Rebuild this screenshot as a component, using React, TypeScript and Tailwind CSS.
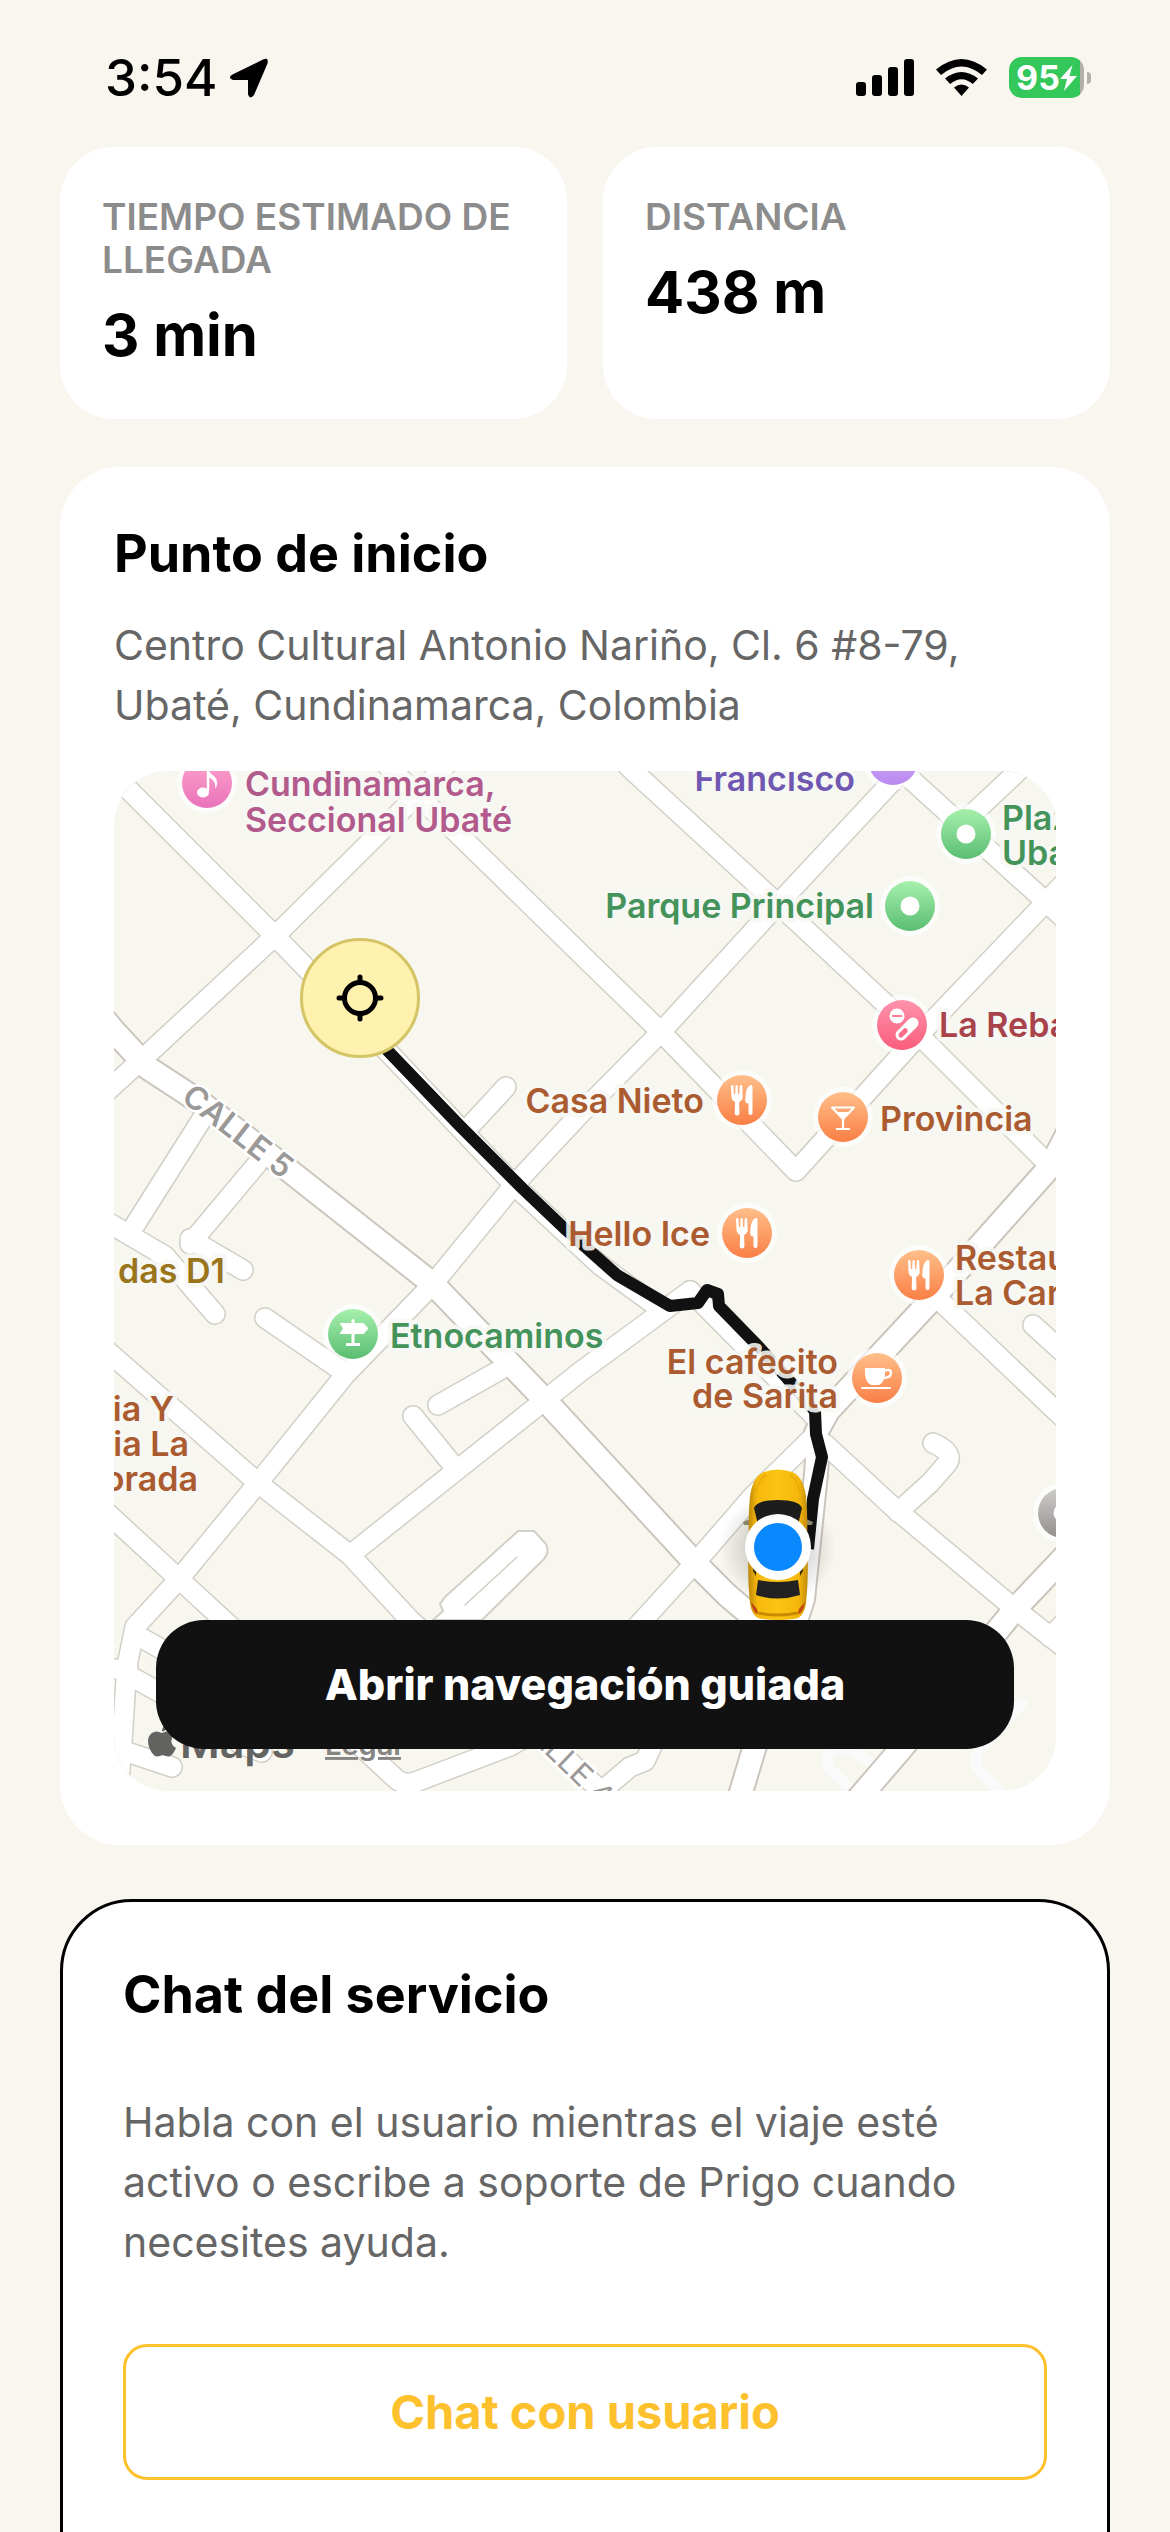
import type { ReactNode } from 'react';
import { FaApple } from 'react-icons/fa';

// Street geometry, in map units
const minorRoads = [
  'M100 762 L129 791 L268 930 L308 971 L388 1053 L514 1186 L600 1266 L655 1306',
  'M104 1095 L149 1054 L275 937 L373 840 L417 796 L446 766',
  'M387 766 L417 796 L457 834 L590 964 L661 1033 L796 1172 L919 1036 L1046 903 L1070 878',
  'M627 766 L633 772 L778 905 L919 1036 L1050 1167',
  'M433 1285 L514 1186 L580 1115 L661 1033 L778 905 L888 787 L910 765',
  'M893 764 L1046 903 L1070 925',
  'M965 822 L1015 775 L1030 760',
  'M433 1285 L345 1376 L258 1484 L179 1580 L135 1628 L128 1662 L126 1680 L122 1743 L118 1800',
  'M265 1319 L345 1374',
  'M438 1406 L507 1367',
  'M413 1417 L452 1465',
  'M350 1556 L545 1401 L580 1373 L655 1318 L690 1292',
  'M690 1292 L703 1305 L815 1418',
  'M104 1349 L258 1484 L350 1556 L410 1621 L550 1745 L610 1800',
  'M104 1511 L179 1580 L367 1753 L395 1779 Q405 1788 418 1782 L510 1747 L540 1730',
  'M202 1120 L135 1226',
  'M257 1165 L190 1245',
  'M104 1221 L165 1257 L215 1315',
  'M190 1240 L243 1271',
  'M506 1088 L470 1127',
  'M933 1444 Q958 1455 944 1468 L930 1484 L898 1513',
  'M1033 1326 L1066 1356',
  'M935 1297 L1056 1412 L1070 1425',
  'M825 1445 L893 1508 L1015 1610 L1066 1650',
  'M1050 1638 L1066 1622',
  'M813 1438 L753 1497 L695 1564 L643 1621 L600 1667',
  'M597 1796 L630 1768 L645 1762 L656 1738',
  'M104 1670 L128 1670',
  'M140 1638 L200 1672',
  'M132 1678 L200 1716',
  'M124 1752 L172 1768',
  'M240 1745 L262 1753',
];

const majorRoads = [
  'M104 1020 L114 1032 L148 1069 L200 1103 L277 1162 L433 1285 L545 1401 L580 1439 L695 1564 L727 1596 L850 1700',
  'M1070 1130 L1050 1168 L935 1297 L828 1412 L816 1434',
  'M818 1445 L816 1475 L803 1600 L754 1750 L739 1800',
  'M1070 1552 L1015 1610 L901 1750 L858 1800',
];

const faintRoads = [
  'M873 1765 Q835 1738 828 1756 Q824 1768 838 1778 L860 1798',
  'M1022 1704 L980 1750 Q970 1762 982 1774 L1004 1796',
];

const route =
  'M366 1030 L388 1052 L460 1127 L523 1190 L564 1229 L617 1276 L670 1307 L698 1304 L707 1291 L718 1295 L719 1307 L757 1346 L787 1379 L815 1412 L816 1435 L822 1458 L813 1500 L808 1550';

type Label = { text: string; x: number; y: number; color: string; end?: boolean };

const labels: Label[] = [
  { text: 'Cundinamarca,', x: 245, y: 797, color: '#b25a8c' },
  { text: 'Seccional Ubaté', x: 245, y: 833, color: '#b25a8c' },
  { text: 'Francisco', x: 855, y: 792, color: '#7058b2', end: true },
  { text: 'Plaz', x: 1002, y: 831, color: '#44935b' },
  { text: 'Uba', x: 1002, y: 866, color: '#44935b' },
  { text: 'Parque Principal', x: 874, y: 919, color: '#44935b', end: true },
  { text: 'La Reba', x: 939, y: 1038, color: '#a8434b' },
  { text: 'Casa Nieto', x: 704, y: 1114, color: '#ab5b30', end: true },
  { text: 'Provincia', x: 880, y: 1132, color: '#ab5b30' },
  { text: 'Hello Ice', x: 710, y: 1247, color: '#ab5b30', end: true },
  { text: 'Restau', x: 955, y: 1271, color: '#ab5b30' },
  { text: 'La Car', x: 955, y: 1306, color: '#ab5b30' },
  { text: 'das D1', x: 225, y: 1284, color: '#99751c', end: true },
  { text: 'Etnocaminos', x: 390, y: 1349, color: '#44935b' },
  { text: 'ia Y', x: 174, y: 1422, color: '#ab5b30', end: true },
  { text: 'ia La', x: 189, y: 1457, color: '#ab5b30', end: true },
  { text: 'orada', x: 198, y: 1492, color: '#ab5b30', end: true },
  { text: 'El cafecito', x: 838, y: 1375, color: '#ab5b30', end: true },
  { text: 'de Sarita', x: 838, y: 1409, color: '#ab5b30', end: true },
];

function Poi({ x, y, fill, children }: { x: number; y: number; fill: string; children?: ReactNode }) {
  return (
    <g transform={`translate(${x} ${y})`}>
      <circle r="30" fill="#fff" opacity="0.65" />
      <circle r="25" fill={`url(#${fill})`} />
      {children}
    </g>
  );
}

const Cutlery = () => (
  <g fill="#fff">
    <path d="M-11-14q0-1 1.2-1t1.3 1l.4 8h1.3l.3-8q0-1 1.1-1t1.1 1l.3 8h1.3l.4-8q0-1 1.3-1t1.2 1l.5 11q0 3-3.6 5l.4 11q0 2.500-2.400 2.500t-2.400-2.500l.4-11q-3.600-2-3.600-5z" />
    <path d="M10.500-13v26q0 2-2 2t-2-2v-9.500q-3.500 0-3.300-3.500 .3-10 3.300-13.500 1.600-2 3-1.500 1 .3 1 2z" />
  </g>
);

const Dot = () => <circle r="9.500" fill="#fff" />;

function Taxi() {
  return (
    <g transform="translate(778 1545)">
      <ellipse cy="4" rx="58" ry="56" fill="url(#shade)" />
      <path d="M-28-25l-7 3 1 3 8 0zM28-25l7 3-1 3-8 0z" fill="#8a8468" />
      <path d="M-28-48q3-20 14-24 14-5 28 0 11 4 14 24 2 20 1 45 2 35-1 62-2 15-12 16-16 2-32 0-10-1-12-16-3-27-1-62-1-25 1-45z" fill="url(#taxi)" />
      <path d="M-22-52q4-15 10-17M22-52q-4-15-10-17" fill="none" stroke="#e8ab08" strokeWidth="1.500" />
      <path d="M-24-36q3-8 24-8t24 8l-5 21q-19-6-38 0z" fill="#1d1d1d" />
      <path d="M-24-20q3 18 2 52l-3-5zM24-20q-3 18-2 52l3-5z" fill="#3b3108" />
      <path d="M-20 36q20 4 40 0l2 15q-22 7-44 0z" fill="#222" />
      <path d="M-27 58q2 11 7 12l-1-5zM27 58q-2 11-7 12l1-5z" fill="#c2440c" />
      <path d="M-20 69q20 4 40 0" fill="none" stroke="#c98a04" strokeWidth="3" />
      <circle cy="3" r="33" fill="#fff" />
      <circle cy="3" r="24" fill="#0a89ff" />
    </g>
  );
}

function RouteMap() {
  return (
    <svg
      viewBox="114 772 942 1020"
      preserveAspectRatio="xMidYMid slice"
      className="block h-full w-full font-['Inter',sans-serif]"
      role="img"
      aria-label="Mapa de la ruta"
    >
      <defs>
        <linearGradient id="orange" x2="0" y2="1">
          <stop stopColor="#ffbf8a" />
          <stop offset="1" stopColor="#f97f45" />
        </linearGradient>
        <linearGradient id="green" x2="0" y2="1">
          <stop stopColor="#a6f0ac" />
          <stop offset="1" stopColor="#5bbd73" />
        </linearGradient>
        <linearGradient id="pink" x2="0" y2="1">
          <stop stopColor="#ffa4cb" />
          <stop offset="1" stopColor="#e972bb" />
        </linearGradient>
        <linearGradient id="red" x2="0" y2="1">
          <stop stopColor="#ff93ad" />
          <stop offset="1" stopColor="#f85d7a" />
        </linearGradient>
        <linearGradient id="purple" x2="0" y2="1">
          <stop stopColor="#d9b4ff" />
          <stop offset="1" stopColor="#b98af0" />
        </linearGradient>
        <linearGradient id="gray" x2="0" y2="1">
          <stop stopColor="#cfcdcc" />
          <stop offset="1" stopColor="#928f8e" />
        </linearGradient>
        <linearGradient id="taxi" x2="1" y2="0">
          <stop stopColor="#b98509" />
          <stop offset="0.15" stopColor="#f7b90c" />
          <stop offset="0.5" stopColor="#fcc413" />
          <stop offset="0.85" stopColor="#f5b60b" />
          <stop offset="1" stopColor="#c08c0b" />
        </linearGradient>
        <radialGradient id="shade">
          <stop offset="0.4" stopColor="#000" stopOpacity="0.18" />
          <stop offset="1" stopColor="#000" stopOpacity="0" />
        </radialGradient>
      </defs>

      <rect x="114" y="772" width="942" height="1020" fill="#f7f7ef" />

      {/* streets: outlines first, then the surfaces */}
      <g fill="none" strokeLinecap="round" strokeLinejoin="round">
        <g stroke="#fafafa" strokeWidth="11">
          {faintRoads.map((d) => <path key={d} d={d} />)}
        </g>
        <g stroke="#d2cfc7" strokeWidth="22">
          {minorRoads.map((d) => <path key={d} d={d} />)}
        </g>
        <g stroke="#cbc5bd" strokeWidth="26">
          {majorRoads.map((d) => <path key={d} d={d} />)}
        </g>
        <path
          d="M518 1532 L534 1532 L546 1545 Q550 1553 544 1560 L482 1621 L433 1621 L443 1612 L440 1605 L445 1598 Z"
          fill="#fff"
          stroke="#d2cfc7"
          strokeWidth="2"
        />
        <path d="M465 1606 L517 1558" stroke="#d2cfc7" strokeWidth="1.500" />
        <g stroke="#fff" strokeWidth="19">
          {minorRoads.map((d) => <path key={d} d={d} />)}
        </g>
        <g stroke="#fff" strokeWidth="22">
          {majorRoads.map((d) => <path key={d} d={d} />)}
        </g>
      </g>

      <path d={route} fill="none" stroke="#111" strokeWidth="12" strokeLinejoin="round" />

      {/* street names */}
      <g fill="#9b9997" stroke="#fff" strokeWidth="5" strokeLinejoin="round" paintOrder="stroke">
        <text transform="translate(180 1101) rotate(38)" fontSize="32" fontWeight="600">CALLE 5</text>
        <text transform="translate(513 1724) rotate(44)" fontSize="30" fontWeight="400">CALLE 4</text>
      </g>

      <g fontSize="34" fontWeight="600" stroke="#f8f8f4" strokeOpacity="0.88" strokeWidth="9" strokeLinejoin="round" paintOrder="stroke">
        {labels.map((label) => (
          <text key={label.text} x={label.x} y={label.y} fill={label.color} textAnchor={label.end ? 'end' : 'start'}>
            {label.text}
          </text>
        ))}
      </g>

      <Poi x={207} y={784} fill="pink">
        <path d="M1-14v22" stroke="#fff" strokeWidth="2.500" />
        <ellipse cx="-4" cy="9.500" rx="6" ry="5" fill="#fff" />
        <path d="M1-15q1 5 6 8 6 6 1 13 2-8-7-12z" fill="#fff" />
      </Poi>
      <Poi x={893} y={761} fill="purple" />
      <Poi x={966} y={835} fill="green"><Dot /></Poi>
      <Poi x={910} y={907} fill="green"><Dot /></Poi>
      <Poi x={902} y={1026} fill="red">
        <circle cx="-5" cy="-9" r="7.500" fill="#fff" />
        <path d="M-10-9h10" stroke="#fb7d97" strokeWidth="2" />
        <g transform="translate(5 4) rotate(-45)">
          <rect x="-14" y="-5.500" width="28" height="11" rx="5.500" fill="#fff" />
          <rect x="-11" y="-2.500" width="11" height="5" rx="2.500" fill="#fa6c88" />
        </g>
      </Poi>
      <Poi x={742} y={1101} fill="orange"><Cutlery /></Poi>
      <Poi x={747} y={1234} fill="orange"><Cutlery /></Poi>
      <Poi x={919} y={1276} fill="orange"><Cutlery /></Poi>
      <Poi x={843} y={1118} fill="orange">
        <path d="M-11-9.500h22L0 2zM0 2v10M-7 12H7" fill="none" stroke="#fff" strokeWidth="2.200" strokeLinejoin="round" />
        <path d="M-7-5H7L0 2z" fill="#fff" />
      </Poi>
      <Poi x={353} y={1335} fill="green">
        <path d="M-1.500-14q1.500-2 3 0v3h9l5 5.500-5 5.500h-9v9h5.500v3h-14v-3h5.500V0h-12l3.500-5.500L-13.500-11h12z" fill="#fff" />
      </Poi>
      <Poi x={877} y={1379} fill="orange">
        <path d="M-12-10H8q1 14-6 17h-8q-7-3-6-17z" fill="#fff" />
        <path d="M8-7.500q6-2 6 2.500 0 5-8 5" fill="none" stroke="#fff" strokeWidth="2.400" />
        <path d="M-15 10h28" stroke="#fff" strokeWidth="2.200" strokeLinecap="round" />
      </Poi>
      <Poi x={1063} y={1514} fill="gray"><Dot /></Poi>

      {/* pickup point */}
      <g transform="translate(360 999)">
        <circle r="58.500" fill="#fff2ae" stroke="#d5c465" strokeWidth="3" />
        <circle r="15.500" fill="none" stroke="#000" strokeWidth="5" />
        <path d="M0-21v5M0 21v-5M-21 0h5M21 0h-5" stroke="#000" strokeWidth="5" strokeLinecap="round" />
      </g>

      <Taxi />

      <FaApple x={143} y={1722} size={38} color="#636361" />
      <text x="180" y="1759" fontSize="43" fontWeight="600" fill="#636361">Maps</text>
      <a href="#legal">
        <text x="325" y="1756" fontSize="29" fontWeight="600" fill="#858583" textDecoration="underline">Legal</text>
      </a>
    </svg>
  );
}

function StatusBar() {
  return (
    <header className="flex h-[147px] items-center justify-between pt-2 pr-[79px] pl-[105px]">
      <div className="flex items-center gap-3">
        <time className="text-[51px] leading-none font-medium">3:54</time>
        <svg viewBox="0 0 40 40" className="size-10" aria-hidden="true">
          <path d="M3.500 16.500 34 1.500q6-2.500 4.500 4L25 37q-4 5-6-.5V22H4q-6-2-.5-5.500z" />
        </svg>
      </div>
      <div className="flex items-center">
        <svg viewBox="0 0 58 37" className="mr-[22px] h-[37px] w-[58px]" aria-hidden="true">
          <rect y="23" width="10" height="14" rx="3" />
          <rect x="16" y="16" width="10" height="21" rx="3" />
          <rect x="32" y="8" width="10" height="29" rx="3" />
          <rect x="48" width="10" height="37" rx="3" />
        </svg>
        <svg viewBox="0 0 51 37" className="mr-[22px] h-[37px] w-[51px]" aria-hidden="true">
          <path d="M0 10.500Q25.500-10.500 51 10.500L46 16Q25.500-1 5 16z" />
          <path d="M9 19.500Q25.500 6.500 42 19.500L36.800 25Q25.500 15.500 14.200 25z" />
          <path d="M18 28.500Q25.500 22.500 33 28.500L25.500 37z" />
        </svg>
        <div className="flex items-center gap-[3px]">
          <div className="flex h-[41px] w-[75px] items-center justify-center rounded-[13px] bg-[linear-gradient(to_right,#34c759_95%,#b3b0ab_95%)] text-white">
            <span className="text-[34px] leading-none font-bold">95</span>
            <svg viewBox="0 0 17 26" className="h-[26px] w-[17px]" aria-hidden="true">
              <path d="M12.500 0 0 14h7L4 26 17 11H9.500z" fill="#fff" />
            </svg>
          </div>
          <div className="h-3 w-1 rounded-r-full bg-[#b3b0ab]" />
        </div>
      </div>
    </header>
  );
}

function StatCard({ label, value }: { label: string; value: string }) {
  return (
    <div className="rounded-[54px] bg-white px-[42px] py-12">
      <dt className="text-[37px] leading-[43px] font-semibold text-[#8c8c8c] uppercase">{label}</dt>
      <dd className="mt-[18px] text-[58px] leading-[72px] font-bold">{value}</dd>
    </div>
  );
}

export default function App() {
  return (
    <div className="h-screen overflow-hidden bg-[#f9f6ef] font-['Inter',sans-serif] text-black">
      <StatusBar />

      <main className="px-[60px]">
        <dl className="grid grid-cols-2 gap-9">
          <StatCard label="Tiempo estimado de llegada" value="3 min" />
          <StatCard label="Distancia" value="438 m" />
        </dl>

        <section className="mt-12 rounded-[60px] bg-white p-[54px]">
          <h2 className="text-[52px] leading-[66px] font-bold">Punto de inicio</h2>
          <p className="mt-7 text-[41px] leading-[60px] text-[#666]">
            Centro Cultural Antonio Nariño, Cl. 6 #8-79, Ubaté, Cundinamarca, Colombia
          </p>
          <div className="relative mt-9 h-[1020px] overflow-hidden rounded-[54px]">
            <RouteMap />
            <button
              type="button"
              className="absolute inset-x-[42px] bottom-[42px] h-[129px] rounded-[48px] bg-[#111] text-[43px] font-extrabold text-white"
            >
              Abrir navegación guiada
            </button>
          </div>
        </section>

        <section className="mt-[54px] rounded-[72px] border-3 border-black bg-white p-[60px] pb-40">
          <h2 className="text-[52px] leading-[66px] font-bold">Chat del servicio</h2>
          <p className="mt-16 text-[41px] leading-[60px] text-[#666]">
            Habla con el usuario mientras el viaje esté activo o escribe a soporte de Prigo cuando necesites ayuda.
          </p>
          <button
            type="button"
            className="mt-[72px] h-[136px] w-full rounded-[24px] border-3 border-[#fdc12d] text-[47px] font-bold text-[#fdc12d]"
          >
            Chat con usuario
          </button>
        </section>
      </main>
    </div>
  );
}
